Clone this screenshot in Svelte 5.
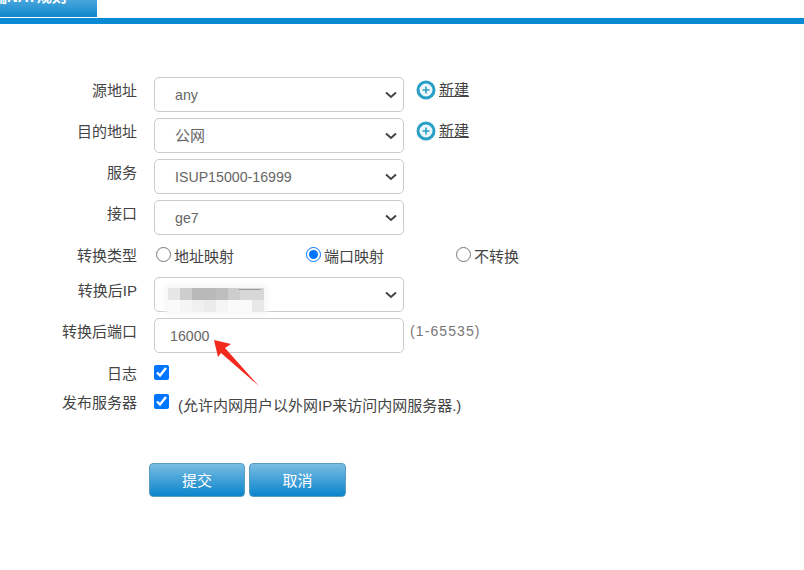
<script lang="ts">
  // selects above the radio row
  const topRows = [
    { label: '源地址', value: 'any', add: true, cn: false },
    { label: '目的地址', value: '公网', add: true, cn: true },
    { label: '服务', value: 'ISUP15000-16999', add: false, cn: false },
    { label: '接口', value: 'ge7', add: false, cn: false }
  ];

  const natTypes = [
    { text: '地址映射', checked: false },
    { text: '端口映射', checked: true },
    { text: '不转换', checked: false }
  ];

  // blurred address, grey level of each mosaic cell
  const mosaic = [
    [230, 205, 185, 185, 190, 205, 215, 215],
    [250, 245, 240, 235, 245, 250, 250, 232]
  ];
</script>

<div class="tabbar">
  <div class="tab"><span>端NAT规则</span></div>
</div>

<form class="form" onsubmit={(e) => e.preventDefault()}>
  {#each topRows as row}
    <div class="row">
      <label class="label" for={row.label}>{row.label}</label>
      <div class="ctrl">
        <select id={row.label} class="field" class:cn={row.cn}>
          <option>{row.value}</option>
        </select>
      </div>
      {#if row.add}
        <a class="add" href="#top">
          <svg width="20" height="20" viewBox="0 0 20 20">
            <circle cx="10" cy="10" r="8" fill="#eef8fc" stroke="#2a9fc6" stroke-width="3" />
            <path d="M10 6.500v7M6.500 10h7" stroke="#2a9fc6" stroke-width="1.600" />
          </svg>
          <span>新建</span>
        </a>
      {/if}
    </div>
  {/each}

  <div class="row radios">
    <span class="label">转换类型</span>
    <div class="radio-group">
      {#each natTypes as t}
        <label class="radio">
          <input type="radio" name="nat" checked={t.checked} />
          <span>{t.text}</span>
        </label>
      {/each}
    </div>
  </div>

  <div class="row">
    <label class="label" for="ip">转换后IP</label>
    <div class="ctrl">
      <select id="ip" class="field"><option></option></select>
      <div class="mosaic" aria-hidden="true">
        {#each mosaic as line}
          {#each line as g}
            <i style="background: rgb({g},{g},{g})"></i>
          {/each}
        {/each}
      </div>
    </div>
  </div>

  <div class="row">
    <label class="label" for="port">转换后端口</label>
    <div class="ctrl">
      <input id="port" class="field text" value="16000" />
      <svg class="arrow" width="60" height="56" viewBox="0 0 60 56">
        <path d="M1 1 L18 5 L12 9 L46 47 L8 14 L5 18 Z" fill="#f22a1e" />
      </svg>
    </div>
    <span class="hint">(1-65535)</span>
  </div>

  <div class="row check log">
    <span class="label">日志</span>
    <input type="checkbox" checked />
  </div>

  <div class="row check">
    <span class="label">发布服务器</span>
    <input type="checkbox" checked />
    <span class="note">(允许内网用户以外网IP来访问内网服务器.)</span>
  </div>

  <div class="actions">
    <button type="submit" class="btn first">提交</button>
    <button type="button" class="btn">取消</button>
  </div>
</form>

<style>
  :global(body) {
    margin: 0;
    background: #fff;
    font-family: "Liberation Sans", "Noto Sans CJK SC", sans-serif;
    font-size: 15px;
    color: #444;
    overflow: hidden;
  }

  .tabbar {
    height: 18px;
    border-bottom: 6px solid #0a8ad2;
  }
  .tab {
    width: 97px;
    height: 17px;
    overflow: hidden;
    background: linear-gradient(#4aa6dc, #0d87cd);
    color: #fff;
    font-size: 15px;
    line-height: 20px;
  }
  .tab span {
    display: block;
    margin: -13px 0 0 -8px;
    white-space: nowrap;
    font-weight: bold;
  }

  .form {
    padding-top: 53px;
  }
  .row {
    display: flex;
    align-items: center;
    height: 35px;
    margin-bottom: 6px;
  }
  .label {
    width: 137px;
    margin-right: 17px;
    flex: none;
    text-align: right;
    position: relative;
    top: -5px;
  }
  .ctrl {
    position: relative;
    width: 250px;
    height: 35px;
    flex: none;
  }
  .field {
    display: block;
    box-sizing: border-box;
    width: 100%;
    height: 100%;
    margin: 0;
    border: 1px solid #ccc;
    border-radius: 5px;
    background-color: #fff;
    font: inherit;
    font-size: 14.2px;
    color: #666;
    padding: 0 0 0 20px;
    appearance: none;
    outline: none;
  }
  .field.cn {
    font-size: 15px;
  }
  select.field {
    background-image: url("data:image/svg+xml,%3Csvg xmlns='http://www.w3.org/2000/svg' width='12' height='8'%3E%3Cpath d='M1 1.500l5 4.500 5-4.500' fill='none' stroke='%23444' stroke-width='2'/%3E%3C/svg%3E");
    background-repeat: no-repeat;
    background-position: right 6px center;
  }
  .text {
    padding-left: 15px;
  }

  .add {
    display: flex;
    align-items: center;
    gap: 3px;
    margin: -10px 0 0 12px;
    color: #444;
    text-decoration: none;
  }
  .add span {
    position: relative;
    top: -1px;
    text-decoration: underline;
  }

  .radios {
    height: 34px;
    margin-bottom: 3px;
    margin-top: -1px;
  }
  .radios .label {
    top: -2.500px;
  }
  .radio-group {
    display: flex;
    position: relative;
    top: -2px;
  }
  .radio {
    display: flex;
    align-items: center;
    width: 150px;
    gap: 3px;
  }
  .radio input {
    width: 15px;
    height: 15px;
    margin: 0 0 2px 2px;
  }

  .mosaic {
    position: absolute;
    left: 14px;
    top: 11px;
    display: grid;
    grid-template-columns: repeat(8, 12px);
    grid-auto-rows: 12px;
    box-shadow: 0 0 6px 3px #f6f6f6;
  }
  .mosaic::after {
    content: '';
    position: absolute;
    left: 71px;
    top: 1px;
    width: 22px;
    height: 1px;
    background: #999;
  }

  .arrow {
    position: absolute;
    left: 59px;
    top: 21px;
  }
  .hint {
    margin-left: 6px;
    font-size: 14px;
    color: #777;
    position: relative;
    top: -5px;
    letter-spacing: 1.100px;
  }

  .check {
    height: 22px;
  }
  .check input {
    width: 15px;
    height: 15px;
    margin: 0 9px 0 0;
    flex: none;
  }
  .check .label {
    top: 0;
  }
  .log {
    margin-top: 8px;
    margin-bottom: 7px;
  }
  .note {
    position: relative;
    top: 3px;
  }

  .actions {
    display: flex;
    gap: 4px;
    margin: 51px 0 0 149px;
  }
  .btn {
    width: 96px;
    height: 34px;
    padding: 0 0 2px;
    border: 1px solid #5b9cc2;
    border-radius: 4px;
    background: linear-gradient(#79bde2, #0a84cc);
    color: #fff;
    font: inherit;
  }
  .btn:not(.first) {
    width: 97px;
  }
</style>
